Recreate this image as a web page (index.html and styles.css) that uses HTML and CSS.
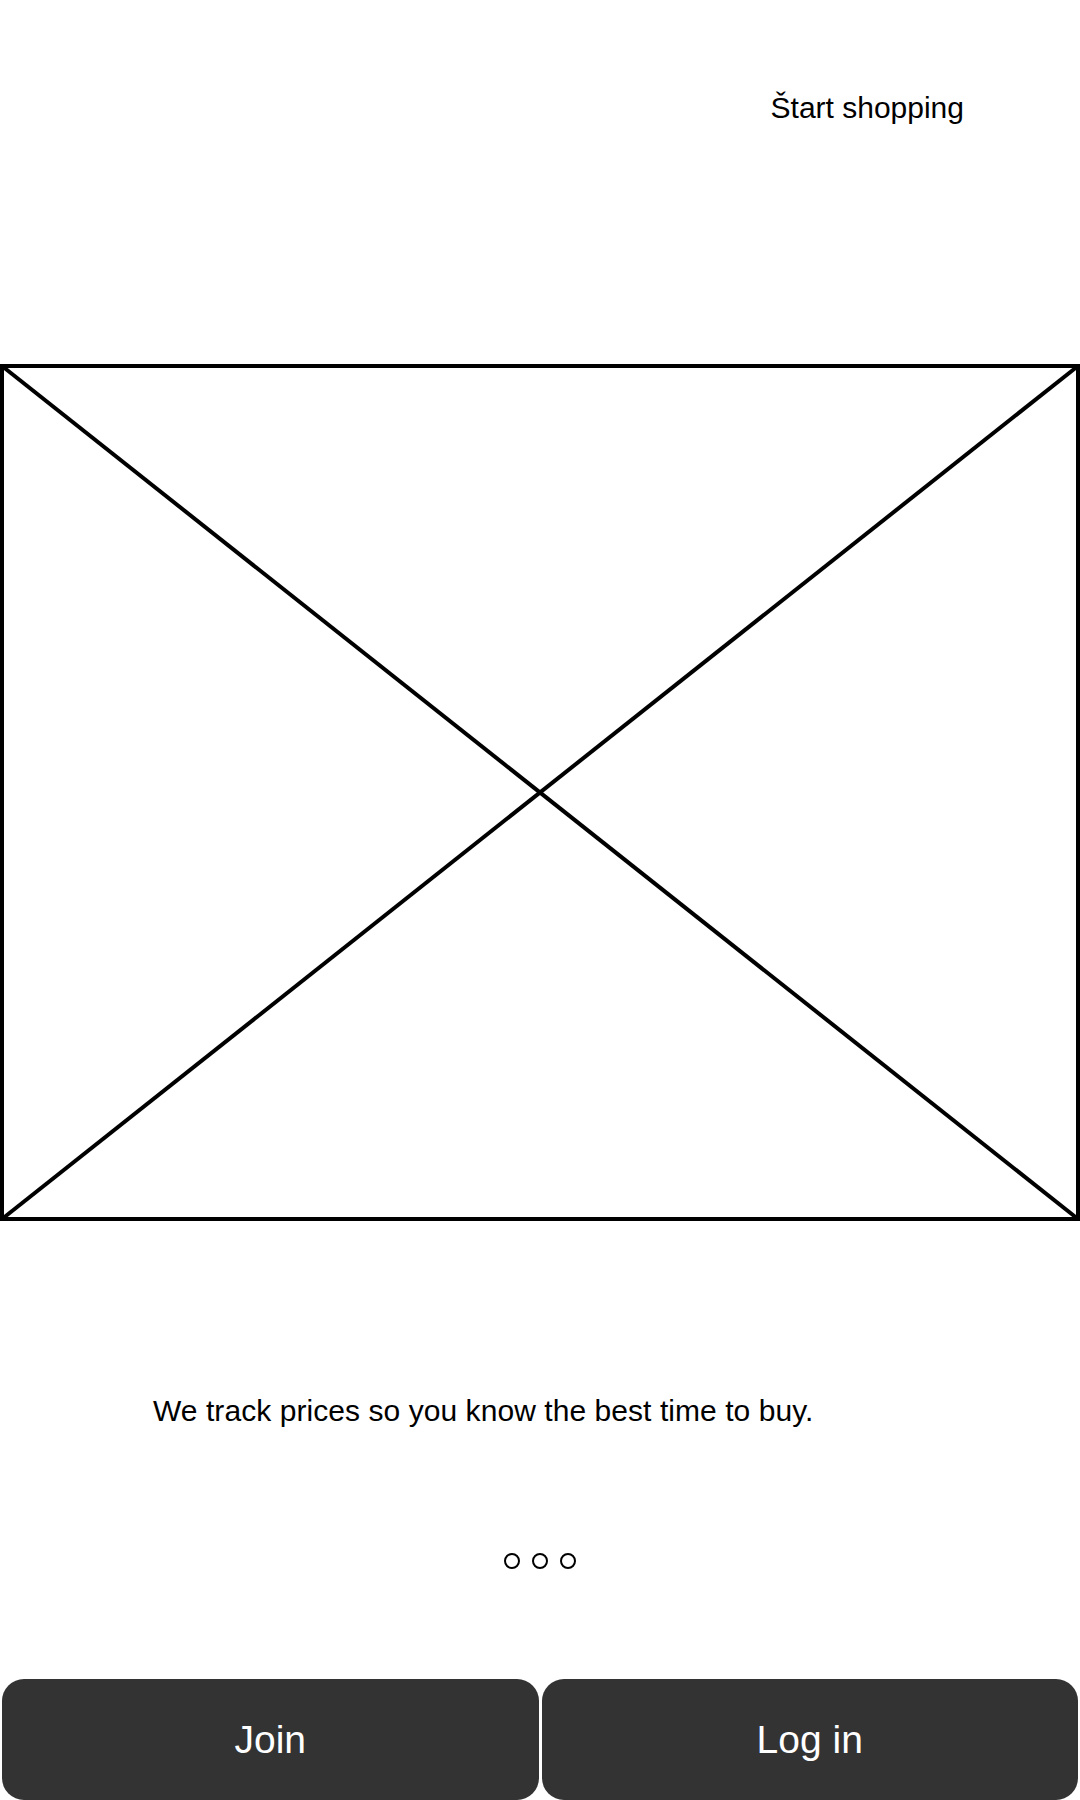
FILE: index.html
```html
<!DOCTYPE html>
<html lang="en">
<head>
    <meta charset="UTF-8">
    <meta name="viewport" content="width=device-width, initial-scale=1.0">
    <title>Onboarding</title>
    <link rel="stylesheet" href="styles.css">
</head>
<body>
    <div class="screen">
        <div class="topbar">
            <a class="skip" href="#">Štart shopping</a>
        </div>

        <div class="placeholder">
            <svg width="1080" height="857" viewBox="0 0 1080 857">
                <rect x="2" y="2" width="1076" height="853" fill="none" stroke="#000" stroke-width="4"/>
                <line x1="2" y1="2" x2="1078" y2="855" stroke="#000" stroke-width="4"/>
                <line x1="1078" y1="2" x2="2" y2="855" stroke="#000" stroke-width="4"/>
            </svg>
        </div>

        <p class="caption">We track prices so you know the best time to buy.</p>

        <div class="dots">
            <span class="dot"></span>
            <span class="dot"></span>
            <span class="dot"></span>
        </div>

        <div class="actions">
            <button class="btn">Join</button>
            <button class="btn">Log in</button>
        </div>
    </div>
</body>
</html>
```

FILE: styles.css
```css
body {
    font-family: "Liberation Sans", Arial, sans-serif;
    margin: 0;
    padding: 0;
    background-color: #fff;
    color: #000;
}
.screen {
    width: 1080px;
    height: 1800px;
    display: flex;
    flex-direction: column;
}
.topbar {
    height: 364px;
    box-sizing: border-box;
    padding: 91px 116px 0 0;
    display: flex;
    justify-content: flex-end;
    align-items: flex-start;
}
.skip {
    font-size: 30px;
    line-height: 34px;
    color: #000;
    text-decoration: none;
}
.placeholder {
    height: 857px;
}
.placeholder svg {
    display: block;
}
.caption {
    margin: 173px 0 0 153px;
    font-size: 30px;
    line-height: 34px;
    letter-spacing: 0.06px;
}
.dots {
    margin-top: 125px;
    display: flex;
    justify-content: center;
    gap: 12px;
}
.dot {
    width: 16px;
    height: 16px;
    box-sizing: border-box;
    border: 2.5px solid #000;
    border-radius: 50%;
}
.actions {
    margin-top: auto;
    height: 121px;
    padding: 0 2px;
    display: flex;
    gap: 3px;
}
.btn {
    flex: 1;
    background-color: #333;
    color: #fff;
    border: none;
    border-radius: 22px;
    font-family: "Liberation Sans", Arial, sans-serif;
    font-size: 39px;
    cursor: pointer;
}
```
